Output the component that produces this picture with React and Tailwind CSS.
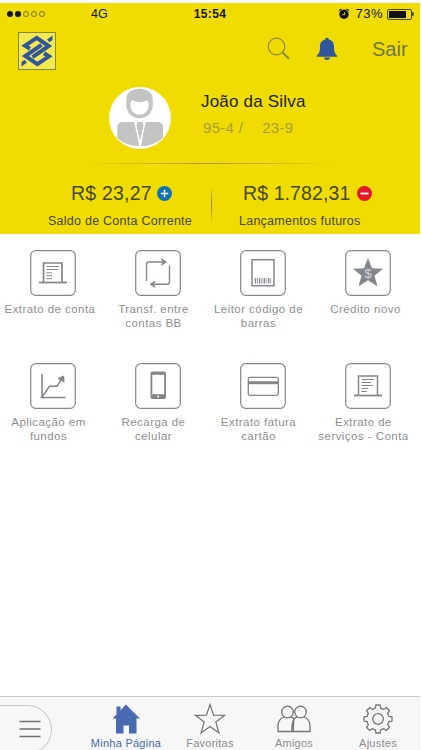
// ---- Icons ----

function BankLogo() {
  return (
    <svg className="w-[38px] h-[38px]" viewBox="0 0 38 38" fill="none" stroke="#31569b">
      <rect x="0.5" y="0.5" width="37" height="37" fill="#f4ea4e" stroke="#7f8a52" />
      <path d="M12 16.8L7 13.6L18.7 5.8L30.7 14L14.5 25.2" strokeWidth="4" />
      <path d="M26 21.2L31 24.4L19.3 32.2L7.3 24L23.5 12.8" strokeWidth="4" />
      <path d="M29 7.5L34.5 3.5V8L31.5 10.2Z M9 30.5L3.5 34.5V30L6.5 27.8Z" fill="#31569b" stroke="none" />
    </svg>
  );
}

function SearchIcon() {
  return (
    <svg className="w-[24px] h-[24px]" viewBox="0 0 24 24" fill="none" stroke="#8d8b45">
      <circle cx="9.5" cy="9.5" r="8.3" strokeWidth="1.2" />
      <path d="M15.5 15.5L22 21.8" strokeWidth="2" />
    </svg>
  );
}

function BellIcon() {
  return (
    <svg className="w-[22px] h-[24px]" viewBox="0 0 22 24" fill="#31569b">
      <path d="M11 0.8C12.2 0.8 12.8 1.5 12.8 2.5C16.6 3.4 18 6.2 18 9.5C18 14.5 18.8 16.6 21.3 18.7V19.8H0.7V18.7C3.2 16.6 4 14.5 4 9.5C4 6.2 5.4 3.4 9.2 2.5C9.2 1.5 9.8 0.8 11 0.8Z" />
      <path d="M7.8 20.6H14.2C13.6 22.3 12.5 23.1 11 23.1C9.5 23.1 8.4 22.3 7.8 20.6Z" />
    </svg>
  );
}

function AlarmIcon() {
  return (
    <svg className="w-[12px] h-[12px]" viewBox="0 0 12 12" fill="#111">
      <circle cx="6" cy="6.3" r="4.7" />
      <path d="M0.8 3.4A2.4 2.4 0 0 1 4 0.9Z M11.2 3.4A2.4 2.4 0 0 0 8 0.9Z" />
      <path d="M6.6 4V6.8H4.2" fill="none" stroke="#f0dc00" strokeWidth="0.9" />
    </svg>
  );
}

function Avatar() {
  return (
    <svg className="w-[62px] h-[62px]" viewBox="0 0 62 62">
      <circle cx="31" cy="31" r="31" fill="#fff" />
      <g fill="#c4c4c5">
        <path d="M8.3 51V40C8.3 36.7 10.5 35 14 35H25.6L30.5 59.3C21.5 59 13.5 56 8.3 51Z" />
        <path d="M54 50.5V40C54 36.7 51.8 35 48.3 35H36L32 59.3C41 59 48.5 56 54 50.5Z" />
        <path d="M17.3 13C17.3 5.8 22.5 1.8 30.5 1.8C38.5 1.8 43.8 5.8 43.8 13V17.5C43.8 25.5 38 31.3 30.5 31.3C23 31.3 17.3 25.5 17.3 17.5Z" />
      </g>
      <path d="M21.4 17.5C21.4 15.3 22.3 14.3 23.6 13.2C28 15.8 33.5 15.8 37.6 13.2C38.9 14.3 39.7 15.3 39.7 17.5C39.7 23.6 35.7 27.8 30.5 27.8C25.4 27.8 21.4 23.6 21.4 17.5Z" fill="#fff" />
      <path d="M25 34.5L31 60L37 34.5Z" fill="#fff" />
      <path d="M28.6 35H33.4L34.6 38.8L31 53.5L27.4 38.8Z" fill="#c4c4c5" />
    </svg>
  );
}

function StatementIcon() {
  return (
    <>
      <path d="M9 32.5H37" strokeWidth="1.8" />
      <path d="M13.5 32V13H32V32" strokeWidth="1.7" />
      <path d="M16.5 16.5H29M16.5 19.5H27.5M16.5 22.8H22M16.5 25.8H22M16.5 28.8H22" strokeWidth="1.1" />
    </>
  );
}

function ServicesIcon() {
  return (
    <>
      <path d="M9 32.5H37" strokeWidth="1.8" />
      <path d="M13.5 32V13H32.5V32" strokeWidth="1.5" />
      <path d="M16.5 16.5H29M16.5 19.5H26M16.5 22.5H28M16.5 25.5H23M16.5 28.5H22" strokeWidth="1.2" />
    </>
  );
}

function TransferIcon() {
  return (
    <>
      <path d="M11.5 31V14.5C11.5 12.8 12.3 12 14 12H30" strokeWidth="1.4" />
      <path d="M34.5 15.5V31.7C34.5 33.5 33.7 34.3 32 34.3H16" strokeWidth="1.4" />
      <path d="M26.5 8.8L31.5 12L26.5 15.2L28 12Z" fill="#85868b" strokeWidth="0.8" />
      <path d="M20 31.1L15 34.3L20 37.5L18.5 34.3Z" fill="#85868b" strokeWidth="0.8" />
    </>
  );
}

function BarcodeIcon() {
  return (
    <>
      <rect x="12" y="9.7" width="22" height="26" strokeWidth="1.5" />
      <path d="M15.5 28V33.5M19.5 28V33.5M24.5 28V33.5M28.8 28V33.5" strokeWidth="1.3" />
      <path d="M17.5 28V33.5M21.3 28V33.5M22.9 28V33.5M26.7 28V33.5M30.7 28V33.5" strokeWidth="0.7" />
    </>
  );
}

function CreditIcon() {
  return (
    <>
      <path d="M23 8L27 18.3L38 18.8L29.5 25.7L32.4 36.3L23 30.3L13.6 36.3L16.5 25.7L8 18.8L19 18.3Z" fill="#85868b" stroke="none" />
      <text x="23" y="28" textAnchor="middle" fontSize="13" fill="#d4d4d6" stroke="none">$</text>
    </>
  );
}

function ChartIcon() {
  return (
    <>
      <path d="M12 11V35.5M10.5 34.5H35.5" strokeWidth="1.6" />
      <path d="M12 34L19.5 23.3H27L32.3 15" strokeWidth="1.5" />
      <path d="M28 15.5L33.7 13L34 19Z" fill="#85868b" strokeWidth="1" />
    </>
  );
}

function PhoneIcon() {
  return (
    <>
      <rect x="15.5" y="8.5" width="15.5" height="27.5" rx="2" fill="#85868b" stroke="none" />
      <rect x="17.3" y="11.8" width="11.9" height="19.4" fill="#fff" stroke="none" />
      <circle cx="23.2" cy="33.6" r="1" fill="#fff" stroke="none" />
    </>
  );
}

function CardIcon() {
  return (
    <>
      <rect x="8.3" y="14.3" width="30" height="18" rx="1.5" strokeWidth="1.3" />
      <path d="M8.3 19.7H38.3" strokeWidth="3" />
    </>
  );
}

// ---- Data ----

const shortcuts = [
  { label: ['Extrato de conta'], icon: StatementIcon, labelClass: 'ml-[3px] -mt-px' },
  { label: ['Transf. entre', 'contas BB'], icon: TransferIcon },
  { label: ['Leitor código de', 'barras'], icon: BarcodeIcon },
  { label: ['Crédito novo'], icon: CreditIcon, labelClass: 'ml-[4px] -mt-px' },
  { label: ['Aplicação em', 'fundos'], icon: ChartIcon },
  { label: ['Recarga de', 'celular'], icon: PhoneIcon },
  { label: ['Extrato fatura', 'cartão'], icon: CardIcon },
  { label: ['Extrato de', 'serviços - Conta'], icon: ServicesIcon },
];

function StatusBar() {
  return (
    <div className="h-[22px] grid grid-cols-3 items-center text-[12px] text-[#16160a]">
      <div className="flex items-center pl-[7px]">
        <div className="flex gap-[2px]">
          <span className="size-[6px] rounded-full bg-[#16160a]" />
          <span className="size-[6px] rounded-full bg-[#16160a]" />
          <span className="size-[6px] rounded-full border border-[#7a7310]" />
          <span className="size-[6px] rounded-full border border-[#7a7310]" />
          <span className="size-[6px] rounded-full border border-[#7a7310]" />
        </div>
        <span className="ml-[46px] text-[12.5px]">4G</span>
      </div>
      <span className="text-center font-bold tracking-[0.4px]">15:54</span>
      <div className="flex items-center justify-end pr-[6px]">
        <AlarmIcon />
        <span className="ml-[5px] text-[13px] tracking-[0.5px]">73%</span>
        <span className="ml-[4px] w-[25px] h-[11px] border border-[#4d490c] rounded-[2px] p-px">
          <span className="block w-[17px] h-full bg-[#111]" />
        </span>
        <span className="w-[2px] h-[4px] bg-[#4d490c] rounded-r" />
      </div>
    </div>
  );
}

function Header() {
  return (
    <header className="mt-[3px] w-[420px] h-[231px] bg-[#f0dc00]">
      <StatusBar />
      <div className="flex items-start h-[62px] pl-[18px] pt-[7px]">
        <BankLogo />
        <div className="ml-[211px] mt-[5px]"><SearchIcon /></div>
        <div className="ml-[25px] mt-[5px]"><BellIcon /></div>
        <span className="ml-[34px] mt-[2px] text-[20px] leading-[30px] text-[#6f7848]">Sair</span>
      </div>

      <div className="flex items-start pl-[109px] h-[76px]">
        <Avatar />
        <div className="ml-[30px] mt-[5px]">
          <p className="text-[17px] leading-[20px] tracking-[0.2px] text-[#221f08]">João da Silva</p>
          <div className="mt-[7px] pl-[2px] flex gap-[19px] text-[15px] leading-[18px] tracking-[0.3px] text-[#a89d3c]">
            <span>95-4 /</span>
            <span>23-9</span>
          </div>
        </div>
      </div>

      <div className="mx-[85px] h-px bg-linear-to-r from-transparent via-[#a89a0a] to-transparent" />

      <div className="flex items-start pt-[17px] text-[#494713]">
        <div className="w-[211px] pl-[48px]">
          <div className="flex items-center pl-[23px] text-[19.5px] leading-[24px] tracking-[0.2px]">
            <span>R$ 23,27</span>
            <svg className="ml-[5px] w-[15px] h-[15px]" viewBox="0 0 15 15">
              <circle cx="7.5" cy="7.5" r="7.5" fill="#0f71b8" />
              <path d="M7.5 3.8V11.2M3.8 7.5H11.2" stroke="#fff" strokeWidth="1.5" />
            </svg>
          </div>
          <p className="mt-[9px] text-[12.5px] leading-[14px] tracking-[0.25px]">Saldo de Conta Corrente</p>
        </div>
        <div className="w-px h-[37px] mt-[5px] bg-linear-to-b from-transparent via-[#8f8408] to-transparent" />
        <div className="pl-[27px]">
          <div className="flex items-center pl-[4px] text-[19.5px] leading-[24px] tracking-[0.1px]">
            <span>R$ 1.782,31</span>
            <svg className="ml-[7px] w-[15px] h-[15px]" viewBox="0 0 15 15">
              <circle cx="7.5" cy="7.5" r="7.5" fill="#e5172c" />
              <path d="M3.5 7.5H11.5" stroke="#fff" strokeWidth="1.8" />
            </svg>
          </div>
          <p className="mt-[9px] text-[12.5px] leading-[14px] tracking-[0.25px]">Lançamentos futuros</p>
        </div>
      </div>
    </header>
  );
}

function Shortcut({ label, icon: Icon, labelClass = '' }) {
  return (
    <button className="flex flex-col items-center">
      <svg className="w-[46px] h-[46px] ml-[9px]" viewBox="0 0 46 46" fill="none" stroke="#85868b">
        <rect x="0.7" y="0.7" width="44.6" height="44.6" rx="5" strokeWidth="1.2" />
        <Icon />
      </svg>
      <span className={`mt-[6px] text-[11.5px] leading-[14px] tracking-[0.45px] text-[#8e8e92] whitespace-nowrap ${labelClass}`}>
        {label.map((line) => (
          <span key={line} className="block">{line}</span>
        ))}
      </span>
    </button>
  );
}

function Tab({ label, active, children }) {
  return (
    <button className="w-[84px] flex flex-col items-center">
      <span className="h-[34px] flex items-center">{children}</span>
      <span className={`text-[11px] leading-[14px] tracking-[0.25px] ${active ? 'text-[#4969b2]' : 'text-[#8e8e90]'}`}>
        {label}
      </span>
    </button>
  );
}

function TabBar() {
  return (
    <nav className="w-[420px] h-[54px] flex bg-[#f7f7f7] border-t border-[#c9c9c9] overflow-hidden">
      <div className="w-[52px] h-[49px] mt-[8px] shrink-0 border border-l-0 border-[#c9c9c9] rounded-r-full">
        <svg className="w-[22px] h-[20px] ml-[19px] mt-[13px]" viewBox="0 0 22 20" stroke="#707174" strokeWidth="1.6">
          <path d="M0.5 2.5H21.5M0.5 10H21.5M0.5 17.5H21.5" />
        </svg>
      </div>
      <div className="flex ml-[32px] pt-[5px]">
        <Tab label="Minha Página" active>
          <svg className="w-[28px] h-[30px]" viewBox="0 0 28 30" fill="#4969b2">
            <path d="M14 0.5L19 5.7L28 14.5H24.5V29.5H17V21.5H11.5V29.5H4V14.5H0.5L4.5 10.5V2.5H8.5V6.3Z" />
          </svg>
        </Tab>
        <Tab label="Favoritas">
          <svg className="w-[32px] h-[32px]" viewBox="0 0 32 32" fill="none" stroke="#747578" strokeWidth="1.2">
            <path d="M16 1.5L19.6 12.2L30.5 12.4L21.8 19L25 30L16 23.5L7 30L10.2 19L1.5 12.4L12.4 12.2Z" />
          </svg>
        </Tab>
        <Tab label="Amigos">
          <svg className="w-[34px] h-[28px]" viewBox="0 0 34 28" fill="none" stroke="#747578" strokeWidth="1.3">
            <circle cx="10.5" cy="7" r="5.8" />
            <circle cx="23.5" cy="7" r="5.8" />
            <path d="M7 12C3 13.5 1 16.5 1 21V26.5H33V21C33 16.5 31 13.5 27 12" />
            <path d="M14 12C15.3 12.6 16.3 13.3 17 14.2C17.7 13.3 18.7 12.6 20 12M17 14.2C15 17 14.8 20 14.8 26.5M17 14.2C16.3 18 16.3 22 16.3 26.5" />
          </svg>
        </Tab>
        <Tab label="Ajustes">
          <svg className="w-[30px] h-[30px]" viewBox="0 0 30 30" fill="none" stroke="#747578" strokeWidth="1.3" strokeLinejoin="round">
            <circle cx="15" cy="15" r="5.3" />
            <path d="M12.4 4.2L12.8 1H17.2L17.6 4.2C18.7 4.5 19.7 4.9 20.6 5.4L23.2 3.5L26.5 6.8L24.6 9.4C25.1 10.3 25.5 11.3 25.8 12.4L29 12.8V17.2L25.8 17.6C25.5 18.7 25.1 19.7 24.6 20.6L26.5 23.2L23.2 26.5L20.6 24.6C19.7 25.1 18.7 25.5 17.6 25.8L17.2 29H12.8L12.4 25.8C11.3 25.5 10.3 25.1 9.4 24.6L6.8 26.5L3.5 23.2L5.4 20.6C4.9 19.7 4.5 18.7 4.2 17.6L1 17.2V12.8L4.2 12.4C4.5 11.3 4.9 10.3 5.4 9.4L3.5 6.8L6.8 3.5L9.4 5.4C10.3 4.9 11.3 4.5 12.4 4.2Z" />
          </svg>
        </Tab>
      </div>
    </nav>
  );
}

export default function App() {
  return (
    <div className="w-[422px] h-[750px] flex flex-col overflow-hidden bg-white font-['Liberation_Sans',Arial,sans-serif]">
      <Header />
      <main className="flex-1 pt-[16px]">
        <div className="w-[420px] -ml-[4px] grid grid-cols-4 auto-rows-[112.5px] items-start">
          {shortcuts.map((item) => (
            <Shortcut key={item.label.join(' ')} {...item} />
          ))}
        </div>
      </main>
      <TabBar />
    </div>
  );
}
